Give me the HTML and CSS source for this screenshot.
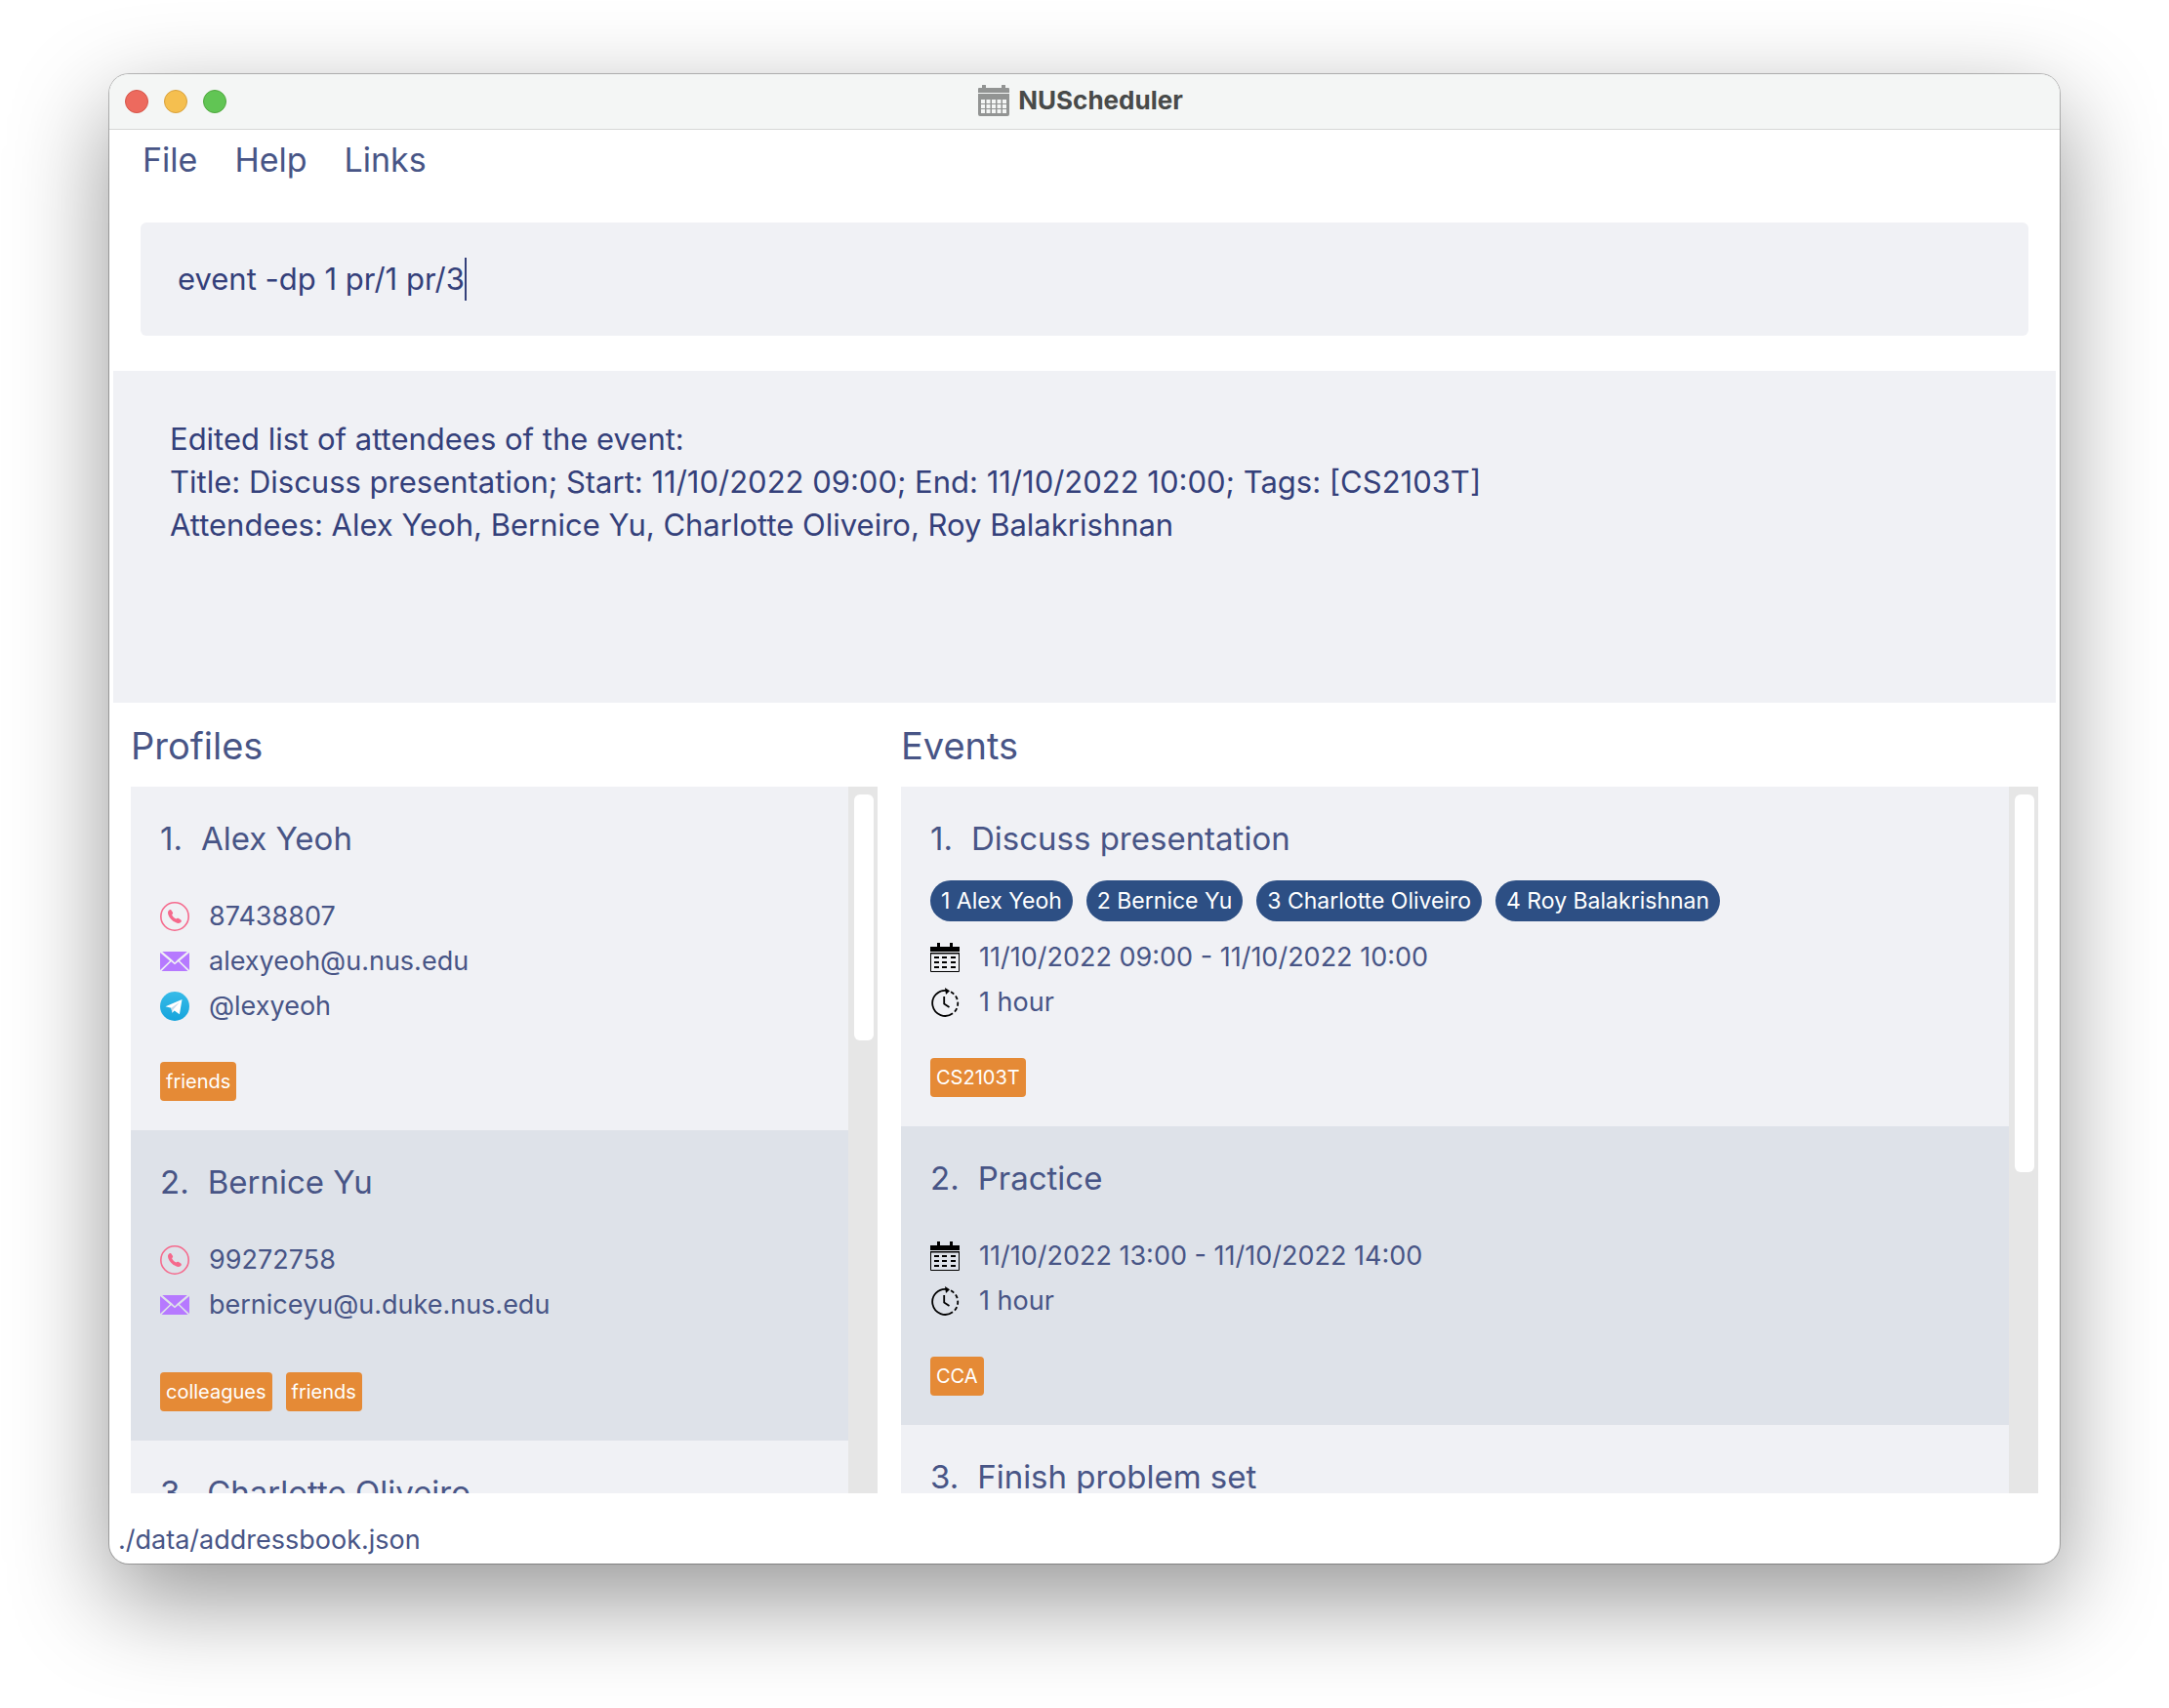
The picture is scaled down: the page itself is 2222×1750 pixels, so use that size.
FILE: index.html
```html
<!DOCTYPE html>
<html lang="en">
<head>
<meta charset="utf-8">
<title>NUScheduler</title>
<link rel="stylesheet" href="styles.css">
</head>
<body>
<svg class="sprite" aria-hidden="true">
  <defs>
    <linearGradient id="sky" x1="0" y1="0" x2="0" y2="1">
      <stop offset="0" stop-color="#37bbe8"/>
      <stop offset="1" stop-color="#16a4dc"/>
    </linearGradient>
  </defs>
  <symbol id="phone" viewBox="0 0 30 30">
    <circle cx="15" cy="15" r="14.2" fill="none" stroke="#f5698c" stroke-width="1.6"/>
    <path d="M8.6 9.2c1-1.200 2.200-1.500 2.800-.7l1.500 2.200c.5.800.2 1.600-.8 2.500.6 1.700 2.400 3.500 4.300 4.400.9-1 1.800-1 2.600-.5l2.300 1.400c1 .8.6 2-.5 2.800-1.300 1-3.100.8-5-.2-3.500-1.800-6.300-4.700-7.300-7.700-.6-1.700-.7-3.200.1-4.200z" fill="#f5698c"/>
  </symbol>
  <symbol id="mail" viewBox="0 0 30 30">
    <path d="M2.200 5h25.600L18 13.200l-3 3-3-3z" fill="#b679ff"/>
    <path d="M0 6v18l10-9.600zM30 6v18l-10-9.600z" fill="#b679ff"/>
    <path d="M1.500 25l9.800-9.800 3.700 3 3.700-3 9.800 9.800z" fill="#b679ff"/>
  </symbol>
  <symbol id="telegram" viewBox="0 0 30 30">
    <circle cx="15" cy="15" r="15" fill="url(#sky)"/>
    <path d="M5.500 15.200L22.500 8l-2.600 15.300-5.200-3.800-2.300 2.300-1-5z" fill="#fff"/>
    <path d="M11.400 16.800l8.600-6-6.500 7.400-1.100 3.600z" fill="#c8dcec"/>
  </symbol>
  <symbol id="calendar" viewBox="0 0 30 30">
    <path d="M0 4h7V0h3v4h10V0h3v4h7v5H0z"/>
    <path d="M.5 10.500h29v19H.5z" fill="none" stroke="#000"/>
    <path d="M0 10h30v1.500H0z"/>
    <path d="M4 15h5M12 15h5M21 15h5M4 20h5M12 20h5M21 20h5M4 25h5M12 25h5M21 25h5" stroke="#000" stroke-width="2"/>
  </symbol>
  <symbol id="clock" viewBox="0 0 30 30">
    <g fill="none" stroke="#000" stroke-width="1.800">
      <path d="M18 3.200A13 13 0 1 0 23 26.300"/>
      <path d="M21 4.300A13 13 0 0 1 23.500 26" stroke-dasharray="4 2.500"/>
      <path d="M14.200 9v7.500l5.300 3.500"/>
    </g>
    <path d="M15 0l5 3.300-4 3.700z"/>
  </symbol>
  <symbol id="app" viewBox="0 0 32 32">
    <path d="M0 4a1 1 0 0 1 1-1h3V1a1.500 1.500 0 0 1 4 0v2h16V1a1.500 1.500 0 0 1 4 0v2h3a1 1 0 0 1 1 1v4H0z"/>
    <path fill-rule="evenodd" d="M0 9h32v21a2 2 0 0 1-2 2H2a2 2 0 0 1-2-2zM3 15v4h4v-4zm5.500 0v4h4v-4zm5.500 0v4h4v-4zm5.500 0v4h4v-4zm5.500 0v4h4v-4zM3 20v4h4v-4zm5.500 0v4h4v-4zm5.500 0v4h4v-4zm5.500 0v4h4v-4zm5.500 0v4h4v-4zM3 25v4h4v-4zm5.500 0v4h4v-4zm5.500 0v4h4v-4zm5.500 0v4h4v-4zm5.500 0v4h4v-4z"/>
  </symbol>
</svg>

<div class="window">
  <header class="titlebar">
    <div class="lights">
      <button class="light light-close" aria-label="Close"></button>
      <button class="light light-minimise" aria-label="Minimise"></button>
      <button class="light light-zoom" aria-label="Zoom"></button>
    </div>
    <h1 class="app-title"><svg class="app-icon" aria-hidden="true"><use href="#app"/></svg>NUScheduler</h1>
  </header>

  <nav class="menu">
    <button class="menu-item">File</button>
    <button class="menu-item">Help</button>
    <button class="menu-item">Links</button>
  </nav>

  <label class="command">
    <input class="command-input" type="text" aria-label="Command" value="event -dp 1 pr/1 pr/3">
    <span class="caret"></span>
  </label>

  <section class="result">
    <p>Edited list of attendees of the event:</p>
    <p>Title: Discuss presentation; Start: 11/10/2022 09:00; End: 11/10/2022 10:00; Tags: [CS2103T]</p>
    <p>Attendees: Alex Yeoh, Bernice Yu, Charlotte Oliveiro, Roy Balakrishnan</p>
  </section>

  <main class="panels">
    <section class="panel">
      <h2 class="panel-title">Profiles</h2>
      <div class="scroller">
        <ol class="list">
          <li class="card">
            <h3 class="card-title"><span>1.</span><span>Alex Yeoh</span></h3>
            <ul class="details">
              <li class="detail"><svg class="icon"><use href="#phone"/></svg>87438807</li>
              <li class="detail"><svg class="icon"><use href="#mail"/></svg>alexyeoh@u.nus.edu</li>
              <li class="detail"><svg class="icon"><use href="#telegram"/></svg>@lexyeoh</li>
            </ul>
            <div class="tags"><span class="tag">friends</span></div>
          </li>
          <li class="card">
            <h3 class="card-title"><span>2.</span><span>Bernice Yu</span></h3>
            <ul class="details details-short">
              <li class="detail"><svg class="icon"><use href="#phone"/></svg>99272758</li>
              <li class="detail"><svg class="icon"><use href="#mail"/></svg>berniceyu@u.duke.nus.edu</li>
            </ul>
            <div class="tags"><span class="tag">colleagues</span><span class="tag">friends</span></div>
          </li>
          <li class="card">
            <h3 class="card-title"><span>3.</span><span>Charlotte Oliveiro</span></h3>
          </li>
        </ol>
        <div class="scrollbar"><div class="thumb thumb-profiles"></div></div>
      </div>
    </section>

    <section class="panel">
      <h2 class="panel-title">Events</h2>
      <div class="scroller">
        <ol class="list">
          <li class="card">
            <h3 class="card-title"><span>1.</span><span>Discuss presentation</span></h3>
            <div class="people">
              <span class="person">1 Alex Yeoh</span>
              <span class="person">2 Bernice Yu</span>
              <span class="person">3 Charlotte Oliveiro</span>
              <span class="person">4 Roy Balakrishnan</span>
            </div>
            <ul class="details">
              <li class="detail"><svg class="icon"><use href="#calendar"/></svg>11/10/2022 09:00 - 11/10/2022 10:00</li>
              <li class="detail"><svg class="icon"><use href="#clock"/></svg>1 hour</li>
            </ul>
            <div class="tags"><span class="tag">CS2103T</span></div>
          </li>
          <li class="card">
            <h3 class="card-title"><span>2.</span><span>Practice</span></h3>
            <ul class="details">
              <li class="detail"><svg class="icon"><use href="#calendar"/></svg>11/10/2022 13:00 - 11/10/2022 14:00</li>
              <li class="detail"><svg class="icon"><use href="#clock"/></svg>1 hour</li>
            </ul>
            <div class="tags"><span class="tag">CCA</span></div>
          </li>
          <li class="card">
            <h3 class="card-title"><span>3.</span><span>Finish problem set</span></h3>
          </li>
        </ol>
        <div class="scrollbar"><div class="thumb thumb-events"></div></div>
      </div>
    </section>
  </main>

  <footer class="status">./data/addressbook.json</footer>
</div>
</body>
</html>
```

FILE: styles.css
```css
* {
  box-sizing: border-box;
}

body {
  display: flex;
  height: 100vh;
  margin: 0;
  padding: 76px 112px 148px;
  overflow: hidden;
  background: #fff;
  color: #485586;
  font-family: Inter, "Liberation Sans", sans-serif;
  font-size: 27px;
}

h1, h2, h3, p, ol, ul {
  margin: 0;
  padding: 0;
  font-weight: 400;
  list-style: none;
}

button, input {
  border: 0;
  padding: 0;
  background: none;
  color: inherit;
  font: inherit;
}

.sprite {
  position: absolute;
  width: 0;
  height: 0;
}

.window {
  display: flex;
  flex: 1;
  flex-direction: column;
  min-width: 0;
  overflow: hidden;
  background: #fff;
  border-radius: 20px;
  box-shadow: 0 0 0 1px rgba(0, 0, 0, .25), 0 36px 100px rgba(0, 0, 0, .42);
}

.titlebar {
  display: grid;
  grid-template-columns: 1fr auto 1fr;
  align-items: center;
  height: 57px;
  padding: 0 16px;
  background: #f4f6f5;
  border-bottom: 1px solid #d6d8d7;
}

.lights {
  display: flex;
  gap: 16px;
}

.light {
  width: 24px;
  height: 24px;
  border-radius: 50%;
}

.light-close {
  background: #ed6a5e;
  border: 1px solid #d55549;
}

.light-minimise {
  background: #f5bf4f;
  border: 1px solid #d8a13d;
}

.light-zoom {
  background: #61c554;
  border: 1px solid #50a73f;
}

.app-title {
  display: flex;
  align-items: center;
  gap: 9px;
  padding: 0 8px 3px 0;
  color: #484a49;
  font-size: 26px;
  font-weight: 700;
}

.app-icon {
  width: 32px;
  height: 32px;
  fill: #929493;
}

.menu {
  display: flex;
  gap: 38px;
  padding: 9px 34px 0;
}

.menu-item {
  font-size: 34px;
  line-height: 44px;
}

.command {
  display: flex;
  align-items: center;
  height: 116px;
  margin: 42px 32px 36px;
  padding: 0 38px;
  border-radius: 6px;
  background: #f0f1f5;
  color: #34407a;
  cursor: text;
}

.command-input {
  field-sizing: content;
  outline: none;
  font-size: 31px;
  line-height: 44px;
  caret-color: transparent;
}

.caret {
  width: 2px;
  height: 44px;
  background: #34407a;
}

.result {
  height: 340px;
  margin: 0 4px;
  padding: 48px 58px;
  background: #f0f1f5;
  color: #34407a;
  font-size: 31px;
  line-height: 44px;
}

.panels {
  display: grid;
  flex: 1;
  grid-template-columns: 153fr 233fr;
  gap: 24px;
  min-height: 0;
  padding: 0 22px;
}

.panel {
  display: flex;
  flex-direction: column;
  min-width: 0;
  min-height: 0;
}

.panel-title {
  height: 86px;
  font-size: 38px;
  line-height: 88px;
}

.scroller {
  display: flex;
  flex: 1;
  min-height: 0;
}

.list {
  flex: 1;
  min-width: 0;
  overflow: hidden;
  background: #f0f1f5;
}

.card {
  padding: 31px 30px 30px;
}

.card:nth-child(even) {
  background: #dee2e9;
}

.card-title {
  display: flex;
  gap: 19px;
  height: 65px;
  font-size: 33px;
  line-height: 44px;
}

.people {
  display: flex;
  gap: 14px;
}

.person {
  padding: 0 11px;
  border-radius: 21px;
  background: #2d4f84;
  color: #fff;
  font-size: 23px;
  line-height: 42px;
}

.details {
  display: grid;
  gap: 16px;
  padding: 22px 0 42px;
}

.details-short {
  padding-bottom: 54px;
}

.detail {
  display: flex;
  align-items: center;
  gap: 20px;
  height: 30px;
  line-height: 32px;
}

.icon {
  width: 30px;
  height: 30px;
}

.tags {
  display: flex;
  gap: 14px;
}

.tag {
  padding: 0 6px;
  border-radius: 4px;
  background: #e58a36;
  color: #fff;
  font-size: 20px;
  line-height: 40px;
}

.scrollbar {
  width: 30px;
  padding: 8px 4px 8px 6px;
  background: #e6e6e6;
}

.thumb {
  border-radius: 6px;
  background: #fff;
}

.thumb-profiles {
  height: 252px;
}

.thumb-events {
  height: 387px;
}

.status {
  height: 72px;
  padding: 0 9px;
  line-height: 96px;
}
```
